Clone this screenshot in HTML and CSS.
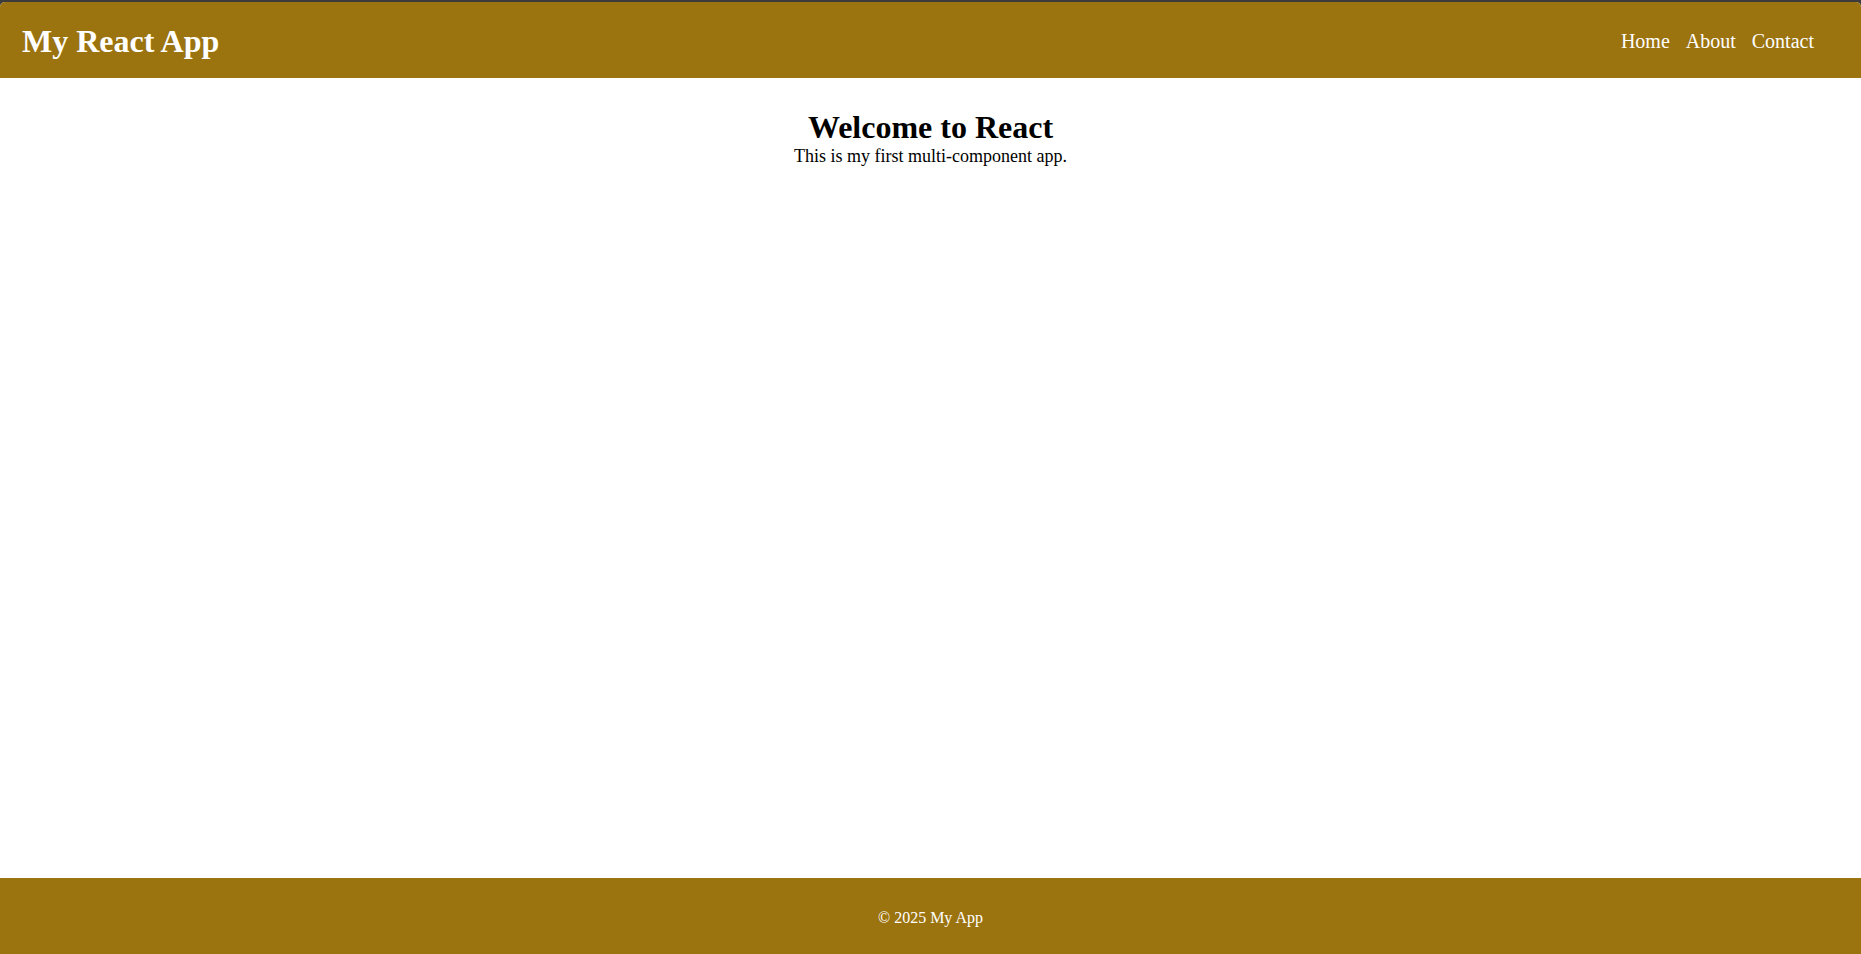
FILE: index.html
```html
<!DOCTYPE html>
<html lang="en">
<head>
<meta charset="utf-8">
<title>My React App</title>
<link rel="stylesheet" href="styles.css">
</head>
<body>
<div class="app">
  <header class="header">
    <h1 class="logo">My React App</h1>
    <nav class="nav">
      <a href="#">Home</a>
      <a href="#">About</a>
      <a href="#">Contact</a>
    </nav>
  </header>
  <main class="main">
    <h2 class="title">Welcome to React</h2>
    <p class="lead">This is my first multi-component app.</p>
  </main>
  <footer class="footer">
    <p>&copy; 2025 My App</p>
  </footer>
</div>
</body>
</html>
```
FILE: styles.css
```css
html, body {
  margin: 0;
  padding: 0;
}
body {
  font-family: "Liberation Serif", "Times New Roman", serif;
  background: #3b3b3b;
  color: #000;
}
.app {
  min-height: calc(100vh - 2px);
  margin-top: 2px;
  display: flex;
  flex-direction: column;
  background: #fff;
  border-radius: 5px 5px 0 0;
  overflow: hidden;
}
.header {
  background: #9b730f;
  height: 76px;
  box-sizing: border-box;
  display: flex;
  align-items: center;
  justify-content: space-between;
  padding: 2px 47px 0 22px;
  flex-shrink: 0;
}
.logo {
  margin: 0;
  color: #fff;
  font-size: 32px;
  font-weight: bold;
}
.nav {
  display: flex;
  gap: 16px;
}
.nav a {
  color: #fff;
  text-decoration: none;
  font-size: 20px;
}
.main {
  flex: 1;
  text-align: center;
  padding-top: 31px;
}
.title {
  margin: 0;
  font-size: 32px;
  font-weight: bold;
}
.lead {
  margin: 0;
  font-size: 18px;
}
.footer {
  background: #9b730f;
  height: 76px;
  box-sizing: border-box;
  padding-top: 3px;
  display: flex;
  align-items: center;
  justify-content: center;
  color: #fff;
  font-size: 16px;
  flex-shrink: 0;
}
.footer p {
  margin: 0;
}
```
